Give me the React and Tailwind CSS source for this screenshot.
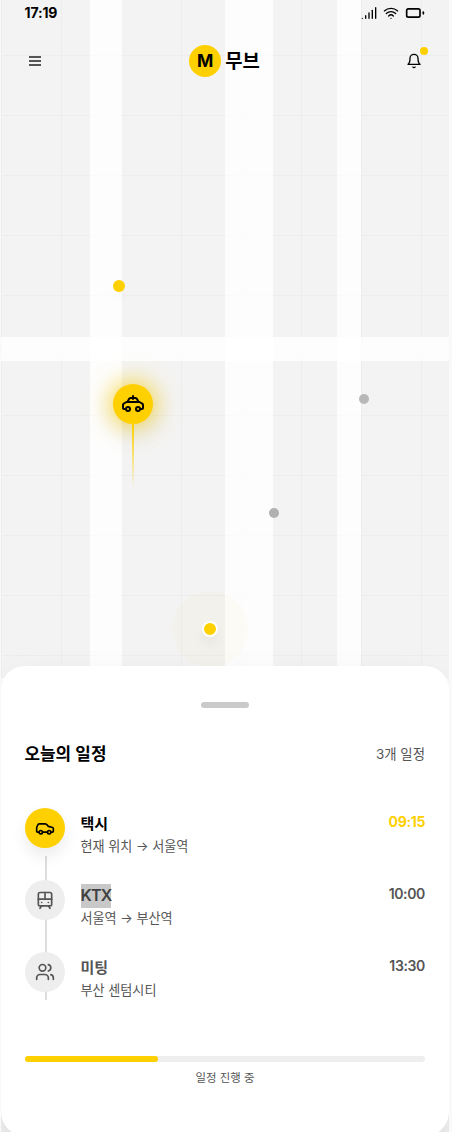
import { Car, Signal, TramFront, Users, Wifi } from "lucide-react";

function Icon({ size = 20, children }) {
  return (
    <svg
      width={size}
      height={size}
      viewBox="0 0 24 24"
      fill="none"
      stroke="currentColor"
      strokeWidth="2"
      strokeLinecap="round"
      strokeLinejoin="round"
    >
      {children}
    </svg>
  );
}

const BatteryIcon = () => (
  <Icon>
    <rect x="2" y="7" width="16" height="10" rx="2" />
    <path d="M22 11v2" />
  </Icon>
);

const BellIcon = () => (
  <Icon size={16}>
    <path d="M6 8a6 6 0 0 1 12 0c0 7 3 9 3 9H3s3-2 3-9" />
    <path d="M10.3 21a1.94 1.94 0 0 0 3.4 0" />
  </Icon>
);

const TaxiIcon = () => (
  <Icon size={24}>
    <path d="M12 4v3" />
    <path d="M6.5 10 8 7q.5-1 1.5-1h5q1 0 1.5 1l1.5 3" />
    <path d="M4 17H3q-1 0-1-1v-3q0-1 1-1.5L5.5 10h13l2.500 1.500q1 .5 1 1.500v3q0 1-1 1h-1" />
    <circle cx="7" cy="17" r="2" />
    <circle cx="17" cy="17" r="2" />
  </Icon>
);

const schedule = [
  { time: "09:15", title: "택시", place: "현재 위치 → 서울역", icon: <Car size={20} />, active: true },
  { time: "10:00", title: "KTX", place: "서울역 → 부산역", icon: <TramFront size={20} />, selected: true },
  { time: "13:30", title: "미팅", place: "부산 센텀시티", icon: <Users size={20} /> },
];

function MapView() {
  return (
    <div className="absolute inset-x-0 top-0 h-[678px] overflow-hidden bg-[#f3f3f3]">
      <div className="absolute inset-0 bg-[linear-gradient(#ededed_1px,transparent_1px),linear-gradient(90deg,#ededed_1px,transparent_1px)] bg-[length:60px_60px] bg-[position:0_-5px]" />
      <div className="absolute inset-y-0 left-[89px] w-8 bg-white/80" />
      <div className="absolute inset-y-0 left-[224px] w-12 bg-white/80" />
      <div className="absolute inset-y-0 left-[336px] w-6 bg-white/80" />
      <div className="absolute inset-x-0 top-[337px] h-6 bg-white/80" />

      <div className="absolute left-28 top-[280px] size-3 rounded-full bg-[#ffd000] shadow-[0_8px_12px_rgba(0,0,0,0.02)]" />
      <div className="absolute left-[358px] top-[394px] size-2.5 rounded-full bg-[#b8b8b8]" />
      <div className="absolute left-[268px] top-[508px] size-2.5 rounded-full bg-[#b0b0b0]" />

      <div className="absolute left-28 top-96 flex size-10 items-center justify-center rounded-full bg-[#ffd000] text-black shadow-[0_0_24px_2px_rgba(255,208,0,0.75),0_8px_28px_rgba(0,0,0,0.1)]">
        <TaxiIcon />
      </div>
      <div className="absolute left-[131px] top-[424px] h-16 w-0.5 bg-linear-to-b from-[#ffd000] to-transparent" />

      <div className="absolute left-[171px] top-[591px] size-[76px] rounded-full bg-[rgba(255,215,60,0.04)]" />
      <div className="absolute left-[201px] top-[621px] size-4 rounded-full border-2 border-white bg-[#ffd000] shadow-[0_8px_12px_rgba(0,0,0,0.05)]" />
    </div>
  );
}

function ScheduleItem({ item }) {
  return (
    <li className="relative flex h-12 items-start">
      <div
        className={`flex size-10 shrink-0 items-center justify-center rounded-full ${
          item.active
            ? "bg-[#ffd000] text-black shadow-[0_8px_16px_rgba(0,0,0,0.08)]"
            : "bg-[#eeeeee] text-[#555555]"
        }`}
      >
        {item.icon}
      </div>
      <div className="ml-[15.5px] flex-1 pt-1">
        <h3 className={`h-6 text-[15px] leading-6 font-semibold ${item.active ? "text-black" : "text-[#555555]"}`}>
          {item.selected ? (
            <span className="inline-block bg-[#c8c8c8] text-base leading-[23px] pb-px tracking-[-0.05em] text-[#404040]">
              {item.title}
            </span>
          ) : (
            item.title
          )}
        </h3>
        <p className="text-[13.1px] leading-5 text-[#555555]">{item.place}</p>
      </div>
      <time
        className={`pt-1 text-[14px] leading-5 tracking-[-0.025em] ${
          item.active ? "font-bold text-[#ffd000]" : "font-semibold text-[#555555]"
        }`}
      >
        {item.time}
      </time>
    </li>
  );
}

export default function App() {
  return (
    <div className="h-[1132px] overflow-hidden bg-[#f9f9f9] pl-px font-['Inter','Noto_Sans_CJK_KR',sans-serif] text-black">
      <div className="relative flex h-full w-[448px] flex-col overflow-hidden">
        <MapView />

        <div className="relative flex h-[26px] shrink-0 items-center justify-between pr-6 pl-[23.5px]">
          <span className="pb-0.5 text-[14px] font-bold tracking-[-0.01em]">17:19</span>
          <div className="flex items-center gap-1.5">
            <Signal size={16} />
            <Wifi size={16} />
            <BatteryIcon />
          </div>
        </div>

        <header className="relative flex h-[70px] shrink-0 items-center justify-between pr-[15px] pl-3.5">
          <button className="flex size-10 flex-col items-center justify-center gap-0.5" aria-label="메뉴">
            <span className="h-0.5 w-3 bg-[#555555]" />
            <span className="h-0.5 w-3 bg-[#555555]" />
            <span className="h-0.5 w-3 bg-[#555555]" />
          </button>
          <div className="flex items-center gap-1">
            <span className="flex size-8 items-center justify-center rounded-full bg-[#ffd000] text-[17.5px] font-bold">
              M
            </span>
            <h1 className="pt-0.5 text-[18.8px] font-bold">무브</h1>
          </div>
          <button className="relative flex size-10 items-center justify-center" aria-label="알림">
            <BellIcon />
            <span className="absolute right-1.5 top-1.5 size-2 rounded-full bg-[#ffd000]" />
          </button>
        </header>

        <section className="relative mt-[570px] h-[470px] shrink-0 rounded-3xl bg-white px-6 pt-9 shadow-[0_25px_50px_-12px_rgba(0,0,0,0.25)]">
          <div className="mx-auto h-1.5 w-12 rounded-full bg-[#cacaca]" />

          <div className="mt-8 flex h-7 items-center justify-between">
            <h2 className="-ml-[0.5px] pt-0.5 text-[16.9px] font-semibold">오늘의 일정</h2>
            <span className="text-[13.4px] text-[#555555]">3개 일정</span>
          </div>

          <div className="relative mt-10">
            <div className="absolute left-5 top-12 h-36 w-0.5 bg-[#dddddd]" />
            <ul className="flex flex-col gap-6">
              {schedule.map((item) => (
                <ScheduleItem key={item.time} item={item} />
              ))}
            </ul>
          </div>

          <div className="mt-14 h-1.5 rounded-full bg-[#eeeeee]">
            <div className="h-full w-1/3 rounded-full bg-[#ffd000]" />
          </div>
          <p className="mt-[7px] text-center text-[11.4px] leading-[18px] text-[#555555]">일정 진행 중</p>
        </section>
      </div>
    </div>
  );
}
